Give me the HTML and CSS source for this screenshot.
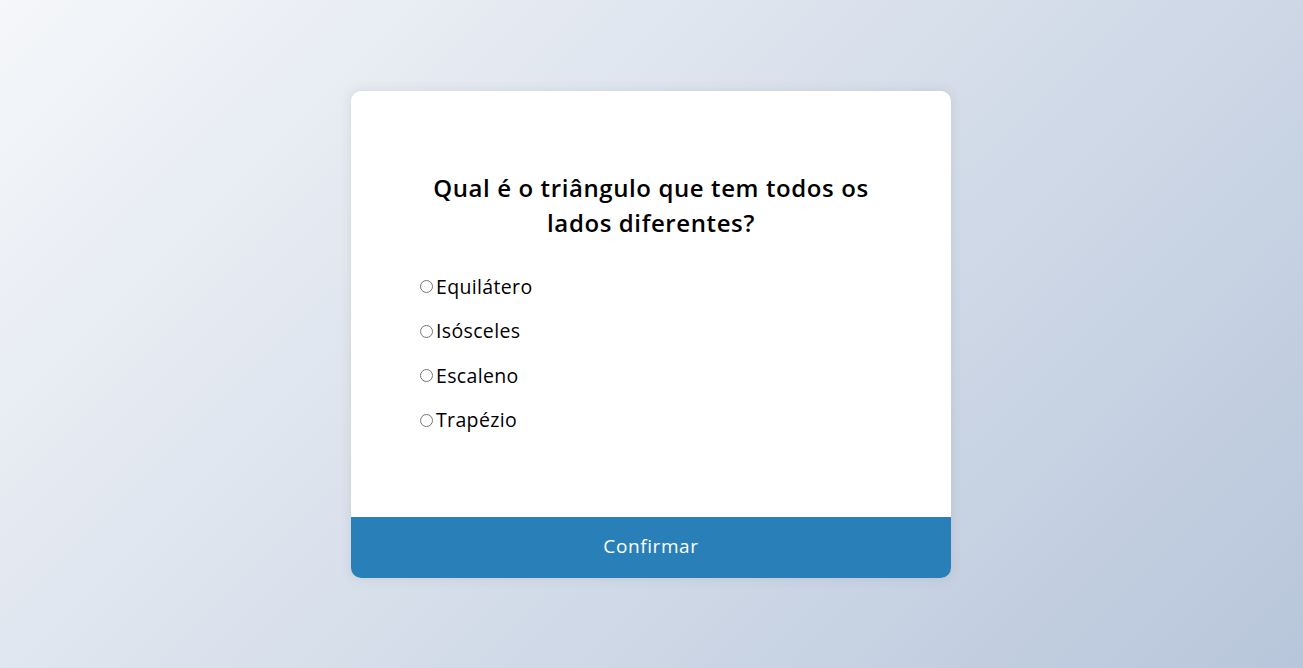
FILE: index.html
```html
<!DOCTYPE html>
<html lang="pt">
<head>
<meta charset="utf-8">
<title>Quiz</title>
<link rel="stylesheet" href="styles.css">
</head>
<body>
<div class="quiz-container">
  <div class="quiz-header">
    <h2 class="question">Qual é o triângulo que tem todos os lados diferentes?</h2>
    <ul class="answers">
      <li class="answer"><input type="radio" name="answer" id="a" class="radio"><label for="a">Equilátero</label></li>
      <li class="answer"><input type="radio" name="answer" id="b" class="radio"><label for="b">Isósceles</label></li>
      <li class="answer"><input type="radio" name="answer" id="c" class="radio"><label for="c">Escaleno</label></li>
      <li class="answer"><input type="radio" name="answer" id="d" class="radio"><label for="d">Trapézio</label></li>
    </ul>
  </div>
  <button class="submit">Confirmar</button>
</div>
</body>
</html>
```
FILE: styles.css
```css
* { box-sizing: border-box; }
html, body { height: 100%; }
body {
  margin: 0;
  font-family: "Open Sans", "Liberation Sans", sans-serif;
  background-color: #b8c6db;
  background-image: linear-gradient(315deg, #b8c6db 0%, #f5f7fa 100%);
  display: flex;
  align-items: center;
  justify-content: center;
  padding-right: 1px;
}
.quiz-container {
  background: #fff;
  width: 600px;
  border-radius: 10px;
  box-shadow: 0 0 10px 2px rgba(100, 100, 100, 0.1);
  overflow: hidden;
}
.quiz-header { padding: 63px 64px 66px; }
.question {
  margin: 0;
  padding: 16px;
  text-align: center;
  font-size: 24px;
  font-weight: 600;
  line-height: 35px;
  letter-spacing: 0.6px;
  color: #000;
}
.answers {
  list-style: none;
  padding: 0;
  margin: 17px 0 16px;
}
.answer {
  font-size: 19.5px;
  line-height: 28.5px;
  letter-spacing: 0.35px;
  margin: 16px 0;
  display: flex;
  align-items: center;
}
.radio { margin: 0 3px 0 5px; width: 13px; height: 13px; }
.answer label { color: #000; }
.submit {
  display: block;
  width: 100%;
  height: 61px;
  padding: 0 0 2px;
  border: none;
  background: #2980b9;
  color: #fff;
  font-family: inherit;
  font-size: 19px;
  letter-spacing: 0.6px;
  cursor: pointer;
}
```
